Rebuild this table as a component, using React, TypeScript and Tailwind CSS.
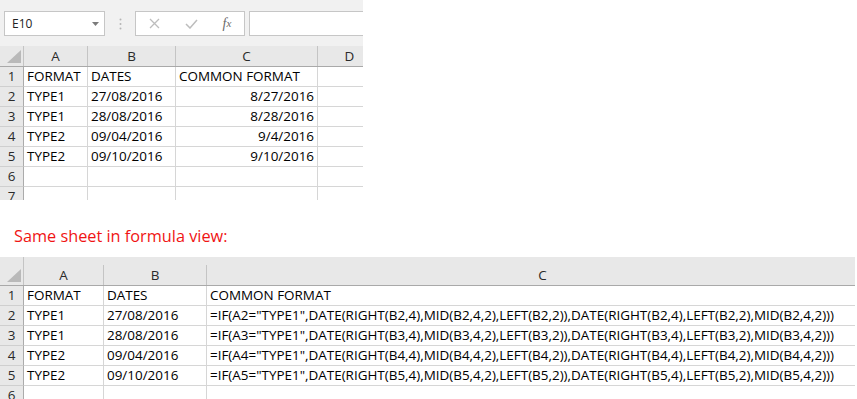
import React from 'react';

type Col = { label: string; w: string; right?: boolean };

const topCols: Col[] = [
  { label: 'A', w: 'w-[64px]' },
  { label: 'B', w: 'w-[88px]' },
  { label: 'C', w: 'w-[142px]', right: true },
  { label: 'D', w: 'w-[64px]' },
];

const bottomCols: Col[] = [
  { label: 'A', w: 'w-[80px]' },
  { label: 'B', w: 'w-[103px]' },
  { label: 'C', w: 'w-[672px]' },
];

const topRows: string[][] = [
  ['FORMAT', 'DATES', 'COMMON FORMAT', ''],
  ['TYPE1', '27/08/2016', '8/27/2016', ''],
  ['TYPE1', '28/08/2016', '8/28/2016', ''],
  ['TYPE2', '09/04/2016', '9/4/2016', ''],
  ['TYPE2', '09/10/2016', '9/10/2016', ''],
  ['', '', '', ''],
  ['', '', '', ''],
];

const formula = (n: number) =>
  `=IF(A${n}="TYPE1",DATE(RIGHT(B${n},4),MID(B${n},4,2),LEFT(B${n},2)),DATE(RIGHT(B${n},4),LEFT(B${n},2),MID(B${n},4,2)))`;

const bottomRows: string[][] = [
  ['FORMAT', 'DATES', 'COMMON FORMAT'],
  ['TYPE1', '27/08/2016', formula(2)],
  ['TYPE1', '28/08/2016', formula(3)],
  ['TYPE2', '09/04/2016', formula(4)],
  ['TYPE2', '09/10/2016', formula(5)],
  ['', '', ''],
];

function Corner({ tall }: { tall?: boolean }) {
  return (
    <div
      className={`w-[24px] shrink-0 border-r border-[#c4c4c4] flex items-end justify-end pr-[2px] pb-[3px] ${
        tall ? 'h-[28px]' : 'h-[20px]'
      }`}
    >
      <svg width="14" height="13" viewBox="0 0 14 13">
        <polygon points="14,0 14,13 0,13" fill="#b9b9b9" />
      </svg>
    </div>
  );
}

function Sheet({ cols, rows, band }: { cols: Col[]; rows: string[][]; band?: boolean }) {
  return (
    <div className="flex flex-col">
      <div className="flex bg-[#e8e8e8] border-b border-[#a9a9a9]">
        <Corner tall={band} />
        <div className="flex flex-col">
          {band && <div className="h-[8px]" />}
          <div className="flex h-[20px]">
            {cols.map((c) => (
              <div
                key={c.label}
                className={`${c.w} shrink-0 border-r border-[#c4c4c4] flex items-center justify-center text-[#2a2a2a]`}
              >
                {c.label}
              </div>
            ))}
          </div>
        </div>
      </div>
      {rows.map((r, i) => (
        <div key={i} className="flex h-[20px]">
          <div className="w-[24px] shrink-0 bg-[#e8e8e8] border-r border-b border-r-[#ababab] border-b-[#cfcfcf] flex items-center justify-center text-[#2a2a2a]">
            {i + 1}
          </div>
          {cols.map((c, j) => (
            <div
              key={j}
              className={`${c.w} shrink-0 border-r border-b border-[#d6d6d6] flex items-center whitespace-nowrap overflow-hidden px-[3px] text-black ${
                c.right && i > 0 ? 'justify-end' : 'justify-start'
              }`}
            >
              {r[j]}
            </div>
          ))}
        </div>
      ))}
    </div>
  );
}

function Toolbar() {
  return (
    <div className="h-[46px] bg-[#f1f1f1] flex items-start pt-[11px] pl-[4px]">
      <div className="w-[101px] h-[25px] shrink-0 bg-white border border-[#c6c6c6] flex items-center justify-between pl-[7px] pr-[5px] text-[12px] text-[#222]">
        <span>E10</span>
        <svg width="7" height="4" viewBox="0 0 7 4">
          <polygon points="0,0 7,0 3.5,4" fill="#7b7b7b" />
        </svg>
      </div>
      <div className="w-[30px] h-[25px] shrink-0 flex items-center justify-center">
        <svg width="3" height="12" viewBox="0 0 3 12">
          <circle cx="1.5" cy="1.5" r="1" fill="#b5b5b5" />
          <circle cx="1.5" cy="6" r="1" fill="#b5b5b5" />
          <circle cx="1.5" cy="10.5" r="1" fill="#b5b5b5" />
        </svg>
      </div>
      <div className="w-[110px] h-[25px] shrink-0 bg-white border border-[#c6c6c6] flex items-center">
        <div className="w-[37px] flex items-center justify-center">
          <svg width="11" height="11" viewBox="0 0 11 11">
            <path d="M1 1 L10 10 M10 1 L1 10" stroke="#bdbdbd" strokeWidth="1.3" fill="none" />
          </svg>
        </div>
        <div className="w-[37px] flex items-center justify-center">
          <svg width="13" height="10" viewBox="0 0 13 10">
            <path d="M1 5 L5 9 L12 1" stroke="#bdbdbd" strokeWidth="1.5" fill="none" />
          </svg>
        </div>
        <div className="w-[34px] flex items-center justify-center font-['Liberation_Serif',serif] italic text-[14px] text-[#6a6a6a] leading-none">
          f<span className="text-[11px]">x</span>
        </div>
      </div>
      <div className="ml-[4px] w-[200px] h-[25px] shrink-0 bg-white border border-[#c6c6c6]" />
    </div>
  );
}

export default function App() {
  return (
    <div className="w-[857px] h-[399px] overflow-hidden bg-white font-['Open_Sans',sans-serif] text-[13.45px] leading-[19px]">
      <div className="w-[363px] h-[200px] overflow-hidden">
        <Toolbar />
        <Sheet cols={topCols} rows={topRows} />
      </div>
      <div className="mt-[25px] h-[22px] pl-[14px] text-[16.3px] leading-[22px] text-[#f01414]">
        Same sheet in formula view:
      </div>
      <div className="mt-[10px] w-[855px] overflow-hidden">
        <Sheet cols={bottomCols} rows={bottomRows} band />
      </div>
    </div>
  );
}
